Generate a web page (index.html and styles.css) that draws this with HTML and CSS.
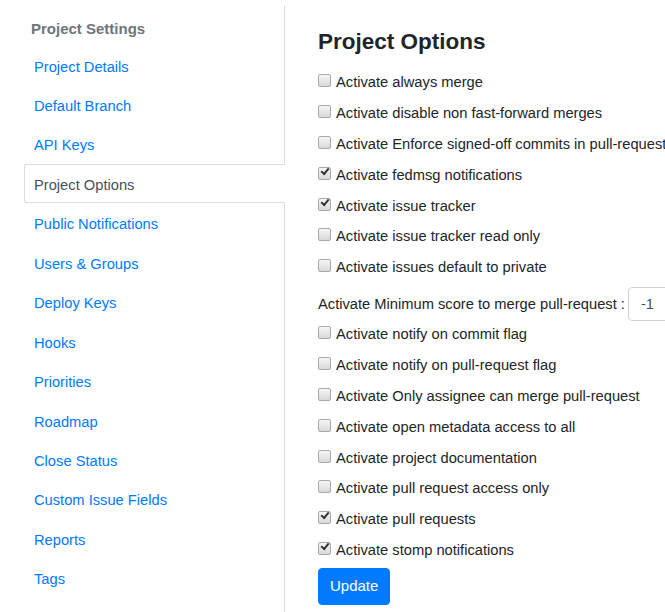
FILE: index.html
```html
<!doctype html>
<html lang="en">
<head>
  <meta charset="UTF-8">
  <meta name="viewport" content="width=device-width, initial-scale=1.0">
  <title>Project Settings</title>
  <link rel="stylesheet" href="styles.css">
</head>
<body>
  <div class="settings">
    <nav class="sidebar">
      <div class="sidebar-title">Project Settings</div>
      <a class="nav-link" href="#details">Project Details</a>
      <a class="nav-link" href="#branch">Default Branch</a>
      <a class="nav-link" href="#apikeys">API Keys</a>
      <a class="nav-link active" href="#options">Project Options</a>
      <a class="nav-link" href="#notifications">Public Notifications</a>
      <a class="nav-link" href="#users">Users &amp; Groups</a>
      <a class="nav-link" href="#deploykeys">Deploy Keys</a>
      <a class="nav-link" href="#hooks">Hooks</a>
      <a class="nav-link" href="#priorities">Priorities</a>
      <a class="nav-link" href="#roadmap">Roadmap</a>
      <a class="nav-link" href="#closestatus">Close Status</a>
      <a class="nav-link" href="#customfields">Custom Issue Fields</a>
      <a class="nav-link" href="#reports">Reports</a>
      <a class="nav-link" href="#tags">Tags</a>
    </nav>

    <main class="content">
      <h3 class="page-title">Project Options</h3>
      <form class="options" onsubmit="return false">
        <label class="option"><input type="checkbox" name="always_merge"> Activate always merge</label>
        <label class="option"><input type="checkbox" name="disable_non_fast_forward_merges"> Activate disable non fast-forward merges</label>
        <label class="option"><input type="checkbox" name="Enforce_signed-off_commits_in_pull-request"> Activate Enforce signed-off commits in pull-requests</label>
        <label class="option"><input type="checkbox" name="fedmsg_notifications" checked> Activate fedmsg notifications</label>
        <label class="option"><input type="checkbox" name="issue_tracker" checked> Activate issue tracker</label>
        <label class="option"><input type="checkbox" name="issue_tracker_read_only"> Activate issue tracker read only</label>
        <label class="option"><input type="checkbox" name="issues_default_to_private"> Activate issues default to private</label>
        <label class="option score">Activate Minimum score to merge pull-request : <input type="text" class="score-input" name="Minimum_score_to_merge_pull-request" value="-1"></label>
        <label class="option"><input type="checkbox" name="notify_on_commit_flag"> Activate notify on commit flag</label>
        <label class="option"><input type="checkbox" name="notify_on_pull-request_flag"> Activate notify on pull-request flag</label>
        <label class="option"><input type="checkbox" name="Only_assignee_can_merge_pull-request"> Activate Only assignee can merge pull-request</label>
        <label class="option"><input type="checkbox" name="open_metadata_access_to_all"> Activate open metadata access to all</label>
        <label class="option"><input type="checkbox" name="project_documentation"> Activate project documentation</label>
        <label class="option"><input type="checkbox" name="pull_request_access_only"> Activate pull request access only</label>
        <label class="option"><input type="checkbox" name="pull_requests" checked> Activate pull requests</label>
        <label class="option"><input type="checkbox" name="stomp_notifications" checked> Activate stomp notifications</label>
        <button type="submit" class="btn-update">Update</button>
      </form>
    </main>
  </div>
</body>
</html>
```

FILE: styles.css
```css
html, body {
  margin: 0;
  height: 100%;
  overflow: hidden;
}
body {
  font-family: "Liberation Sans", Arial, sans-serif;
  font-size: 14.7px;
  line-height: 1.5;
  color: #212529;
  background: #fff;
}
.settings {
  display: flex;
  height: 100%;
}

/* left navigation */
.sidebar {
  flex: 0 0 auto;
  width: 260px;
  margin-top: 5px;
  padding-left: 24px;
  border-right: 1px solid #dcdcdc;
  display: flex;
  flex-direction: column;
}
.sidebar-title {
  padding: 14px 7px 7px;
  line-height: 19.5px;
  font-size: 15px;
  font-weight: bold;
  color: #6c757d;
}
.nav-link {
  display: block;
  padding: 11px 9px 7px;
  line-height: 19.46px;
  border: 1px solid transparent;
  border-right: none;
  color: #007bff;
  text-decoration: none;
}
.nav-link:hover {
  text-decoration: underline;
}
.nav-link.active {
  color: #495057;
  background: #fff;
  border-color: #dcdcdc;
  border-radius: 3px 0 0 3px;
  margin-right: -1px;
  padding-right: 10px;
}

/* main column */
.content {
  flex: 1;
  min-width: 0;
  padding-left: 33px;
  white-space: nowrap;
}
.page-title {
  margin: 28px 0 16px;
  font-size: 22.5px;
  line-height: 27px;
  font-weight: bold;
}
.options {
  display: flex;
  flex-direction: column;
  align-items: flex-start;
}
.option {
  display: flex;
  align-items: center;
  height: 22.8px;
  margin-bottom: 8px;
}
.option input[type="checkbox"] {
  appearance: none;
  -webkit-appearance: none;
  position: relative;
  width: 13px;
  height: 13px;
  margin: -3px 5px 0 0;
  border: 1px solid #a9a9a9;
  border-radius: 2px;
  background: linear-gradient(#f6f6f6, #d9d9d9);
  box-sizing: border-box;
}
.option input[type="checkbox"]:checked::after {
  content: "";
  position: absolute;
  left: 2px;
  top: 0px;
  width: 6px;
  height: 3px;
  border-left: 2.5px solid #333;
  border-bottom: 2.5px solid #333;
  transform: rotate(-50deg);
}
.option.score {
  height: 34.5px;
  margin-bottom: 2px;
}
.score-input {
  width: 80px;
  height: 34.5px;
  box-sizing: border-box;
  margin-left: 3px;
  padding: 6px 12px;
  font: inherit;
  color: #495057;
  border: 1px solid #ced4da;
  border-radius: 4px;
}
.btn-update {
  margin-top: -1px;
  font: inherit;
  font-size: 15px;
  line-height: 22.5px;
  padding: 6px 11px;
  color: #fff;
  background: #007bff;
  border: 1px solid #007bff;
  border-radius: 4px;
  cursor: pointer;
}
.btn-update:hover {
  background: #0069d9;
}
```
